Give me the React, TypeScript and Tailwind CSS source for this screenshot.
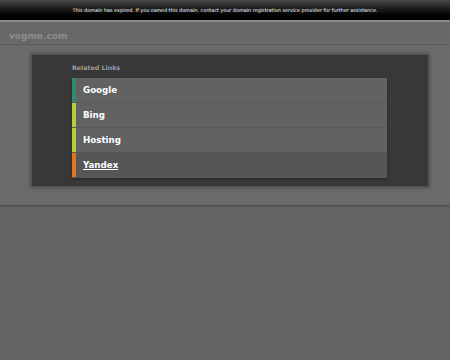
import React from "react";

const links = [
  { name: "Google", color: "bg-[#2e8b6f]", bg: "bg-[#626262]", u: false },
  { name: "Bing", color: "bg-[#b4cf3c]", bg: "bg-[#626262]", u: false },
  { name: "Hosting", color: "bg-[#b4cf3c]", bg: "bg-[#626262]", u: false },
  { name: "Yandex", color: "bg-[#e2761e]", bg: "bg-[#565656]", u: true },
];

export default function App() {
  return (
    <div className="w-[450px] h-[360px] bg-[#636363] overflow-hidden" style={{ fontFamily: '"DejaVu Sans", Verdana, sans-serif' }}>
      <div className="h-[20px] bg-gradient-to-b from-[#4a4a4a] to-[#000000] flex items-center justify-center">
        <span className="text-[4.9px] text-white leading-none">This domain has expired. If you owned this domain, contact your domain registration service provider for further assistance.</span>
      </div>
      <div className="h-[2px] bg-[#8a8a8a]" />
      <div className="h-[23px] bg-[#686868] flex items-center pl-[9px] pt-[6px] border-b border-[#5f5f5f]">
        <span className="text-[9px] font-bold text-[#8d8d8d] leading-none">vogme.com</span>
      </div>
      <div className="bg-[#6a6a6a] pt-[10px] pb-[19px] pl-[32px] pr-[22px] shadow-[0_1px_2px_rgba(0,0,0,0.35)]">
        <div className="h-[131px] bg-[#383838] shadow-[0_0_3px_2px_rgba(0,0,0,0.25)] pl-[40px] pr-[41px] pt-[9px]">
          <div className="text-[6.3px] font-bold text-[#9c9c9c] leading-none h-[14px] pt-[1px]">Related Links</div>
          <div className="flex flex-col shadow-[0_1px_2px_rgba(0,0,0,0.4)]">
            {links.map((l) => (
              <div key={l.name} className={`flex h-[25px] ${l.bg} border-b border-[#595959]`}>
                <div className={`w-[4px] ${l.color}`} />
                <div className="flex items-center pl-[7px]">
                  <span className={`text-[8.7px] font-bold text-white leading-none ${l.u ? "underline" : ""}`}>{l.name}</span>
                </div>
              </div>
            ))}
          </div>
        </div>
      </div>
    </div>
  );
}
